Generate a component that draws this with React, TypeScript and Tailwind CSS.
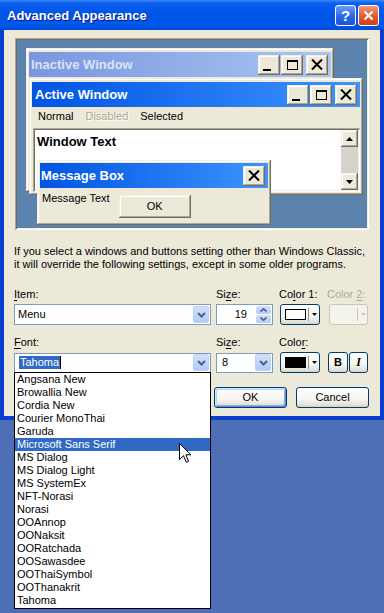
import React from "react";

const raised =
  "shadow-[inset_-1px_-1px_#716f64,inset_1px_1px_#f1efe2,inset_-2px_-2px_#aca899,inset_2px_2px_#fff]";
const sunken =
  "shadow-[inset_1px_1px_#aca899,inset_-1px_-1px_#fff,inset_2px_2px_#716f64,inset_-2px_-2px_#f1efe2]";
const xpBtn =
  "rounded-[3px] border border-[#003c74] bg-[linear-gradient(180deg,#ffffff_0%,#f6f5f0_60%,#e3e0d4_90%,#d6d0c5_100%)]";

const CapBtn = ({ kind }: { kind: "min" | "max" | "close" }) => (
  <div className={`flex h-[20px] w-[22px] items-center justify-center bg-[#ece9d8] ${raised}`}>
    {kind === "min" && <div className="mt-[10px] mr-[4px] h-[2px] w-[8px] bg-black" />}
    {kind === "max" && <div className="h-[10px] w-[11px] border border-t-2 border-black" />}
    {kind === "close" && (
      <svg width="12" height="11" viewBox="0 0 12 11">
        <path d="M1 0.5 L11 10.5 M11 0.5 L1 10.5" stroke="black" strokeWidth="2" />
      </svg>
    )}
  </div>
);

const DropBtn = () => (
  <div className="flex h-[17px] w-[16px] items-center justify-center rounded-[2px] border border-[#bcd0fb] bg-[linear-gradient(180deg,#d3e0fd,#b4c9f8)]">
    <svg width="9" height="6" viewBox="0 0 9 6">
      <path d="M1 1 L4.5 4.5 L8 1" fill="none" stroke="#4d6185" strokeWidth="2" />
    </svg>
  </div>
);

const Tri = ({ color = "black" }: { color?: string }) => (
  <svg width="5" height="3" viewBox="0 0 5 3">
    <path d="M0 0 H5 L2.5 3 Z" fill={color} />
  </svg>
);

const fonts = [
  "Angsana New",
  "Browallia New",
  "Cordia New",
  "Courier MonoThai",
  "Garuda",
  "Microsoft Sans Serif",
  "MS Dialog",
  "MS Dialog Light",
  "MS SystemEx",
  "NFT-Norasi",
  "Norasi",
  "OOAnnop",
  "OONaksit",
  "OORatchada",
  "OOSawasdee",
  "OOThaiSymbol",
  "OOThanakrit",
  "Tahoma",
];

const U = ({ children }: { children: React.ReactNode }) => (
  <span className="underline underline-offset-[2px]">{children}</span>
);

export default function App() {
  return (
    <div className="relative h-[613px] w-[384px] overflow-hidden bg-[#4e6eb5] font-['Liberation_Sans',Arial,sans-serif] text-[11px] leading-[13px] text-black">
      <div className="flex h-[420px] w-[384px] flex-col">
        {/* title bar */}
        <div className="flex h-[30px] items-center bg-[linear-gradient(180deg,#3d8cf8_0%,#0a5ff0_10%,#0054e6_45%,#0058ec_85%,#0049d4_100%)] pl-[7px] pr-[5px]">
          <span className="flex-1 text-[13px] font-bold text-white [text-shadow:1px_1px_#0a1a7a]">
            Advanced Appearance
          </span>
          <div className="flex h-[21px] w-[21px] items-center justify-center rounded-[3px] border border-white bg-[linear-gradient(180deg,#6d9cf9,#2563e6_60%,#1d52d6)] text-[15px] font-bold text-white">
            ?
          </div>
          <div className="ml-[2px] flex h-[21px] w-[21px] items-center justify-center rounded-[3px] border border-white bg-[linear-gradient(180deg,#ee9a78,#e05a30_55%,#cc4418)]">
            <svg width="11" height="11" viewBox="0 0 11 11">
              <path d="M1.5 1.5 L9.5 9.5 M9.5 1.5 L1.5 9.5" stroke="white" strokeWidth="2" />
            </svg>
          </div>
        </div>

        {/* body */}
        <div className="relative flex flex-1 flex-col border-x-4 border-b-4 border-[#0a3fd0] bg-[#ece9d8] px-[10px] pt-[8px]">
          {/* preview */}
          <div className={`relative ml-px h-[192px] w-[354px] bg-[#5b83ad] ${sunken}`}>
            {/* inactive window */}
            <div className={`absolute left-[11px] top-[10px] h-[144px] w-[308px] bg-[#ece9d8] px-[3px] pt-[4px] ${raised}`}>
              <div className="flex h-[25px] items-center bg-[linear-gradient(90deg,#7a96df,#a9c6f2)] pl-[2px] pr-[3px]">
                <span className="flex-1 text-[13px] font-bold text-[#d8e4f8]">Inactive Window</span>
                <CapBtn kind="min" />
                <div className="w-[1px]" />
                <CapBtn kind="max" />
                <div className="w-[3px]" />
                <CapBtn kind="close" />
              </div>
            </div>

            {/* active window */}
            <div className={`absolute left-[14px] top-[40px] h-[117px] w-[334px] bg-[#ece9d8] px-[3px] pt-[4px] ${raised}`}>
              <div className="flex h-[25px] items-center bg-[linear-gradient(90deg,#0054e3,#3d95ff)] pl-[3px] pr-[3px]">
                <span className="flex-1 text-[13px] font-bold text-white">Active Window</span>
                <CapBtn kind="min" />
                <div className="w-[1px]" />
                <CapBtn kind="max" />
                <div className="w-[3px]" />
                <CapBtn kind="close" />
              </div>
              <div className="flex h-[17px] items-center gap-[12px] pl-[6px] pt-[2px]">
                <span>Normal</span>
                <span className="text-[#aca899] [text-shadow:1px_1px_#fff]">Disabled</span>
                <span>Selected</span>
              </div>
              <div className={`mt-[4px] ml-px flex h-[64px] w-[327px] bg-white p-[2px] ${sunken}`}>
                <div className="flex-1 pl-[2px] pt-[5px] text-[13px] font-bold">Window Text</div>
                <div className="flex w-[17px] flex-col bg-[#d6d3ce]">
                  <div className={`flex h-[17px] items-center justify-center bg-[#ece9d8] ${raised}`}>
                    <svg width="7" height="4" viewBox="0 0 7 4">
                      <path d="M3.5 0 L7 4 H0 Z" fill="black" />
                    </svg>
                  </div>
                  <div className="flex-1" />
                  <div className={`flex h-[17px] items-center justify-center bg-[#ece9d8] ${raised}`}>
                    <svg width="7" height="4" viewBox="0 0 7 4">
                      <path d="M0 0 H7 L3.5 4 Z" fill="black" />
                    </svg>
                  </div>
                </div>
              </div>
            </div>

            {/* message box */}
            <div className={`absolute left-[22px] top-[122px] h-[65px] w-[234px] bg-[#ece9d8] px-[3px] pt-[3px] ${raised}`}>
              <div className="flex h-[25px] items-center bg-[linear-gradient(90deg,#0054e3,#3d95ff)] pl-[1px] pr-[3px]">
                <span className="flex-1 text-[13px] font-bold text-white">Message Box</span>
                <CapBtn kind="close" />
              </div>
              <div className="flex items-start">
                <span className="mt-[4px] pl-[2px]">Message Text</span>
                <div className={`ml-[9px] mt-[7px] flex h-[23px] w-[72px] items-center justify-center bg-[#ece9d8] ${raised}`}>
                  OK
                </div>
              </div>
            </div>
          </div>

          <p className="mt-[15px]">
            If you select a windows and buttons setting other than Windows Classic,
            <br />
            it will override the following settings, except in some older programs.
          </p>

          {/* row 1 labels */}
          <div className="mt-[17px] flex">
            <span className="w-[202px]">
              <U>I</U>tem:
            </span>
            <span className="w-[63px]">
              Si<U>z</U>e:
            </span>
            <span className="w-[48px]">
              Co<U>l</U>or 1:
            </span>
            <span className="text-[#aca899]">
              Color <U>2</U>:
            </span>
          </div>
          <div className="mt-[3px] flex items-center">
            <div className="flex h-[21px] w-[197px] items-center border border-[#7f9db9] bg-white pl-[3px] pr-px">
              <span className="flex-1">Menu</span>
              <DropBtn />
            </div>
            <div className="ml-[5px] flex h-[21px] w-[57px] items-center border border-[#7f9db9] bg-white pr-px">
              <span className="flex-1 pr-[9px] text-right">19</span>
              <div className="flex w-[15px] flex-col gap-px">
                <div className="flex h-[8px] items-center justify-center rounded-[2px] bg-[linear-gradient(180deg,#d3e0fd,#b4c9f8)]">
                  <svg width="7" height="4" viewBox="0 0 7 4">
                    <path d="M0.5 3.5 L3.5 0.8 L6.5 3.5" fill="none" stroke="#4d6185" strokeWidth="1.6" />
                  </svg>
                </div>
                <div className="flex h-[8px] items-center justify-center rounded-[2px] bg-[linear-gradient(180deg,#d3e0fd,#b4c9f8)]">
                  <svg width="7" height="4" viewBox="0 0 7 4">
                    <path d="M0.5 0.5 L3.5 3.2 L6.5 0.5" fill="none" stroke="#4d6185" strokeWidth="1.6" />
                  </svg>
                </div>
              </div>
            </div>
            <div className={`ml-[7px] flex h-[21px] w-[40px] items-center pl-[4px] ${xpBtn}`}>
              <div className="h-[11px] w-[21px] border border-black bg-white" />
              <div className="ml-[2px] h-[13px] w-px bg-[#8e8e8e]" />
              <div className="ml-[3px]">
                <Tri />
              </div>
            </div>
            <div className="ml-[9px] flex h-[21px] w-[39px] items-center rounded-[3px] border border-[#c9c7ba] bg-[#f5f4ea] pl-[27px]">
              <div className="h-[13px] w-px bg-[#c9c7ba]" />
              <div className="ml-[3px]">
                <Tri color="#c9c7ba" />
              </div>
            </div>
          </div>

          {/* row 2 labels */}
          <div className="mt-[11px] flex">
            <span className="w-[202px]">
              <U>F</U>ont:
            </span>
            <span className="w-[63px]">
              Si<U>z</U>e:
            </span>
            <span>
              Colo<U>r</U>:
            </span>
          </div>
          <div className="mt-[3px] flex items-center">
            <div className="flex h-[20px] w-[197px] items-center border border-[#7f9db9] bg-white pl-[4px] pr-px">
              <span className="flex flex-1 items-center">
                <span className="bg-[#316ac5] px-px text-white">Tahoma</span>
                <span className="h-[13px] w-px bg-black" />
              </span>
              <DropBtn />
            </div>
            <div className="ml-[5px] flex h-[20px] w-[57px] items-center border border-[#7f9db9] bg-white pl-[5px] pr-px">
              <span className="flex-1">8</span>
              <DropBtn />
            </div>
            <div className={`ml-[7px] flex h-[21px] w-[40px] items-center pl-[4px] ${xpBtn}`}>
              <div className="h-[11px] w-[21px] border border-black bg-black" />
              <div className="ml-[2px] h-[13px] w-px bg-[#8e8e8e]" />
              <div className="ml-[3px]">
                <Tri />
              </div>
            </div>
            <div className={`ml-[8px] flex h-[21px] w-[20px] items-center justify-center text-[11px] font-bold ${xpBtn}`}>
              B
            </div>
            <div className={`ml-px flex h-[21px] w-[19px] items-center justify-center font-['Liberation_Serif',serif] text-[12px] font-bold italic ${xpBtn}`}>
              I
            </div>
          </div>

          <div className="mt-[14px] flex justify-end gap-[9px] pr-px">
            <div className={`flex h-[21px] w-[73px] items-center justify-center ${xpBtn} shadow-[inset_1px_1px_#cee7ff,inset_-1px_-1px_#6982ee,inset_2px_2px_#bcd4f6,inset_-2px_-2px_#89ade4]`}>
              OK
            </div>
            <div className={`flex h-[21px] w-[73px] items-center justify-center ${xpBtn}`}>Cancel</div>
          </div>
        </div>
      </div>

      {/* open font list */}
      <div className="absolute left-[14px] top-[372px] h-[237px] w-[197px] border border-black bg-white">
        {fonts.map((f, i) => (
          <div
            key={f}
            className={`h-[13px] pl-[2px] leading-[13px] ${i === 5 ? "bg-[#316ac5] text-white" : ""}`}
          >
            {f}
          </div>
        ))}
      </div>

      {/* mouse pointer */}
      <svg className="absolute left-[179px] top-[443px]" width="13" height="21" viewBox="0 0 13 21">
        <path
          d="M0.5 0.5 L0.5 16.5 L4.5 12.7 L7.3 19.3 L9.6 18.3 L6.9 11.8 L12 11.8 Z"
          fill="white"
          stroke="black"
          strokeWidth="1"
        />
      </svg>
    </div>
  );
}
